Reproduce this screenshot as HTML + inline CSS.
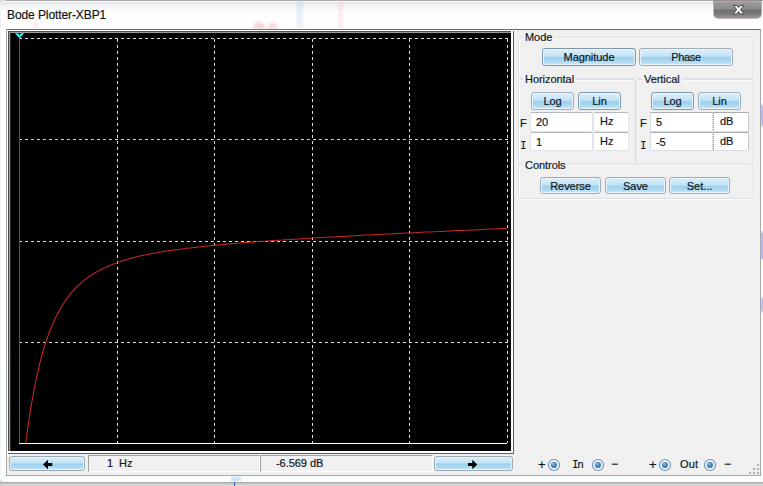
<!DOCTYPE html>
<html lang="en">
<head>
<meta charset="utf-8">
<title>Bode Plotter-XBP1</title>
<style>
html,body{margin:0;padding:0;}
body{width:763px;height:486px;overflow:hidden;background:#fff;font-family:"Liberation Sans",sans-serif;font-size:11px;letter-spacing:-0.05px;color:#0c1424;-webkit-text-stroke:0.18px #0c1424;}
#win{position:absolute;left:0;top:0;width:763px;height:486px;overflow:hidden;background:#dcdcdc;}
#frame{position:absolute;left:0;top:0;width:763px;height:482px;background:linear-gradient(#a8a8a8 0,#a8a8a8 1px,#fcfcfc 1px,#fcfcfc 2px,#e2e4e3 2px,#f0f2f1 5px,#fafbfb 10px,#fefefe 12px,#fefefe 28px,#fbfefe 100%);border-radius:6px 0 0 5px;box-shadow:inset 1px 0 0 #f4f5f5;}
#shadow{position:absolute;left:0;top:482px;width:763px;height:4px;background:linear-gradient(#a4a4a4,#c6c6c6 40%,#dedede);}
.abs{position:absolute;}
#title{position:absolute;left:7px;top:8px;font-size:12px;line-height:15px;color:#111;letter-spacing:-0.09px;white-space:nowrap;}
#close{position:absolute;left:714px;top:1px;width:47px;height:17px;border-radius:0 0 4px 4px;background:linear-gradient(#b4b4b4 0,#999 10%,#8c8c8c 45%,#707070 55%,#7c7c7c 80%,#999 100%);box-shadow:0 0 0 1px rgba(130,105,105,.5);}
#close svg{position:absolute;left:0;top:0;}
#client{position:absolute;left:6px;top:29px;width:753px;height:445px;background:#f0f0f0;border:1px solid #a8a8a8;border-top-color:#6e6e6e;}
/* everything below is positioned in page coordinates */
.grp{position:absolute;border:1px solid #dbe1e6;border-radius:3px;box-shadow:inset 1px 1px 0 #fcfcfc,1px 1px 0 #fcfcfc;box-sizing:border-box;}
.glab{position:absolute;background:#f0f0f0;padding:0 2px;line-height:13px;white-space:nowrap;color:#0c1424;}
.btn{position:absolute;box-sizing:border-box;border:1px solid #9fadb8;border-radius:3px;box-shadow:inset 0 0 0 1px #e9f5fc;background:linear-gradient(#dceefa 0,#cfe8f7 25%,#c3e3f5 46%,#9dd0ed 53%,#acd8f0 78%,#cfe9f7 100%);text-align:center;white-space:nowrap;color:#0a1428;}
.btn.sel{border-color:#7f98aa;}
.edit{position:absolute;box-sizing:border-box;background:#fff;border:1px solid #dfe3ea;border-top-color:#b4b8c0;border-radius:2px;white-space:nowrap;}
.edit2{position:absolute;box-sizing:border-box;background:#fff;border:1px solid #dadde3;border-top-color:#a8abb2;border-radius:1px;white-space:nowrap;}
.edit2.u{border-left:1px dotted #8a8a8a;border-right-color:#c8c8c8;}
.sunk{position:absolute;box-sizing:border-box;background:#f0f0f0;border:1px solid #fff;border-top-color:#a0a0a0;border-left-color:#a0a0a0;white-space:nowrap;}
.t{position:absolute;white-space:nowrap;line-height:13px;}
.mono{font-family:"DejaVu Sans Mono","Liberation Mono",monospace;}
</style>
</head>
<body>
<div id="win">
  <div id="frame"></div>
  <div id="shadow"></div>
  <!-- faint things showing through the glass title bar -->
  <div class="abs" style="left:296px;top:1px;width:7px;height:27px;background:linear-gradient(rgba(190,215,240,.45),rgba(215,232,248,.4));filter:blur(1.3px);"></div>
  <div class="abs" style="left:338px;top:1px;width:5px;height:27px;background:rgba(250,205,225,.4);filter:blur(1.3px);"></div>
  <div class="abs" style="left:253px;top:22px;width:12px;height:7px;border-radius:6px 6px 0 0;background:rgba(240,150,160,.42);filter:blur(1.6px);"></div>
  <div class="abs" style="left:267px;top:23px;width:11px;height:6px;border-radius:6px 6px 0 0;background:rgba(240,150,160,.38);filter:blur(1.6px);"></div>
  <div class="abs" style="left:33px;top:22px;width:5px;height:7px;background:rgba(250,215,235,.5);filter:blur(1px);"></div>
  <div class="abs" style="left:761px;top:105px;width:3px;height:21px;background:rgba(120,120,235,.7);filter:blur(1px);"></div>
  <div class="abs" style="left:761px;top:232px;width:3px;height:27px;background:rgba(120,120,235,.7);filter:blur(1px);"></div>
  <div class="abs" style="left:761px;top:298px;width:3px;height:14px;background:rgba(120,120,235,.65);filter:blur(1px);"></div>
    <div class="abs" style="left:231px;top:477px;width:10px;height:4px;background:rgba(170,205,240,.6);filter:blur(1px);"></div>
  <div class="abs" style="left:234px;top:482px;width:1px;height:4px;background:#3a50b0;"></div>

  <div id="title">Bode Plotter-XBP1</div>
  <div id="close"><svg width="47" height="17" viewBox="0 0 47 17"><path d="M19.3 4.4 L22.8 4.4 L24.6 6.6 L26.4 4.4 L29.9 4.4 L26.4 8.6 L30.1 13 L26.5 13 L24.6 10.6 L22.7 13 L19.1 13 L22.8 8.6 Z" fill="#fff" stroke="#454545" stroke-width="1" stroke-linejoin="round"/></svg></div>

  <div id="client"></div>

  <!-- plot -->
  <svg class="abs" style="left:0;top:0" width="520" height="460" viewBox="0 0 520 460">
    <g shape-rendering="crispEdges">
      <rect x="7" y="30" width="507" height="424" fill="#ffffff"/>
      <rect x="8" y="31" width="506" height="423" fill="#5c5c5c"/>
      <rect x="9" y="32" width="502" height="419" fill="#9c9c9c"/>
      <rect x="8" y="31" width="503" height="1" fill="#4e4e4e"/>
      <rect x="8" y="31" width="1" height="420" fill="#4e4e4e"/>
      <rect x="511" y="31" width="2" height="422" fill="#ffffff"/>
      <rect x="8" y="451" width="505" height="2" fill="#ffffff"/>
      <rect x="10" y="33" width="501" height="418" fill="#000000"/>
      <rect x="10" y="33" width="1" height="418" fill="#303030"/>
      <g stroke="#dadada" stroke-width="1" stroke-dasharray="3 3" fill="none">
        <line x1="19" y1="38.5" x2="508" y2="38.5"/>
        <line x1="19" y1="139.5" x2="508" y2="139.5"/>
        <line x1="19" y1="241.5" x2="508" y2="241.5"/>
        <line x1="19" y1="342.5" x2="508" y2="342.5"/>
        <line x1="117.5" y1="39" x2="117.5" y2="443"/>
        <line x1="214.5" y1="39" x2="214.5" y2="443"/>
        <line x1="312.5" y1="39" x2="312.5" y2="443"/>
        <line x1="409.5" y1="39" x2="409.5" y2="443"/>
        <line x1="507.5" y1="39" x2="507.5" y2="443"/>
      </g>
      <rect x="19" y="443" width="488" height="1" fill="#ffffff"/>
      <rect x="19" y="38" width="1" height="405" fill="#c42424"/>
    </g>
    <path d="M14.8 33.3 L18.3 33.3 L19.5 35.3 L20.7 33.3 L24.2 33.3 L19.5 38.6 Z" fill="#2ee8ee"/>
    <path d="M25.7 443.5 L26.0 441.3 L26.5 437.5 L27.0 433.7 L27.5 430.0 L28.0 426.5 L28.5 423.0 L29.0 419.6 L29.5 416.3 L30.0 413.1 L30.5 409.9 L31.0 406.9 L31.5 403.9 L32.0 400.9 L32.5 398.1 L33.0 395.3 L33.5 392.6 L34.0 390.0 L34.5 387.4 L35.0 384.9 L35.5 382.4 L36.0 380.0 L36.5 377.6 L37.0 375.3 L37.5 373.1 L38.0 370.9 L38.5 368.8 L39.0 366.7 L39.5 364.6 L40.0 362.6 L40.5 360.7 L41.0 358.7 L41.5 356.9 L42.0 355.0 L42.5 353.2 L43.0 351.5 L43.5 349.8 L44.0 348.1 L44.5 346.5 L45.0 344.9 L45.5 343.3 L46.0 341.7 L46.5 340.2 L47.0 338.8 L47.5 337.3 L48.0 335.9 L48.5 334.5 L49.0 333.2 L49.5 331.8 L50.0 330.5 L50.5 329.2 L51.0 328.0 L51.5 326.8 L52.0 325.6 L52.5 324.4 L53.0 323.2 L53.5 322.1 L54.0 321.0 L54.5 319.9 L55.0 318.8 L55.5 317.8 L56.0 316.8 L56.5 315.7 L57.0 314.8 L57.5 313.8 L58.0 312.8 L58.5 311.9 L59.0 311.0 L59.5 310.1 L60.0 309.2 L61.0 307.5 L62.0 305.8 L63.0 304.2 L64.0 302.7 L65.0 301.2 L66.0 299.7 L67.0 298.3 L68.0 297.0 L69.0 295.7 L70.0 294.4 L71.0 293.2 L72.0 292.0 L73.0 290.9 L74.0 289.8 L75.0 288.7 L76.0 287.7 L77.0 286.7 L78.0 285.7 L79.0 284.8 L80.0 283.8 L81.0 283.0 L82.0 282.1 L83.0 281.3 L84.0 280.4 L85.0 279.7 L86.0 278.9 L87.0 278.1 L88.0 277.4 L89.0 276.7 L90.0 276.0 L91.0 275.3 L92.0 274.7 L93.0 274.1 L94.0 273.4 L95.0 272.8 L96.0 272.3 L97.0 271.7 L98.0 271.1 L99.0 270.6 L100.0 270.0 L101.0 269.5 L102.0 269.0 L103.0 268.5 L104.0 268.1 L105.0 267.6 L106.0 267.1 L107.0 266.7 L108.0 266.2 L109.0 265.8 L110.0 265.4 L111.0 265.0 L112.0 264.6 L113.0 264.2 L114.0 263.8 L115.0 263.4 L116.0 263.1 L117.0 262.7 L118.0 262.3 L119.0 262.0 L120.0 261.7 L121.0 261.3 L122.0 261.0 L123.0 260.7 L124.0 260.4 L125.0 260.1 L126.0 259.8 L127.0 259.5 L128.0 259.2 L129.0 258.9 L130.0 258.6 L134.0 257.6 L138.0 256.6 L142.0 255.6 L146.0 254.8 L150.0 254.0 L154.0 253.2 L158.0 252.5 L162.0 251.8 L166.0 251.1 L170.0 250.5 L174.0 249.9 L178.0 249.4 L182.0 248.9 L186.0 248.3 L190.0 247.9 L194.0 247.4 L198.0 246.9 L202.0 246.5 L206.0 246.1 L210.0 245.7 L214.0 245.3 L218.0 244.9 L222.0 244.5 L226.0 244.2 L230.0 243.8 L234.0 243.5 L238.0 243.2 L242.0 242.8 L246.0 242.5 L250.0 242.2 L254.0 241.9 L258.0 241.6 L262.0 241.3 L266.0 241.1 L270.0 240.8 L274.0 240.5 L278.0 240.2 L282.0 240.0 L286.0 239.7 L290.0 239.5 L294.0 239.2 L298.0 239.0 L302.0 238.7 L306.0 238.5 L310.0 238.2 L314.0 238.0 L318.0 237.8 L322.0 237.5 L326.0 237.3 L330.0 237.1 L334.0 236.9 L338.0 236.6 L342.0 236.4 L346.0 236.2 L350.0 236.0 L354.0 235.8 L358.0 235.5 L362.0 235.3 L366.0 235.1 L370.0 234.9 L374.0 234.7 L378.0 234.5 L382.0 234.3 L386.0 234.1 L390.0 233.9 L394.0 233.7 L398.0 233.5 L402.0 233.3 L406.0 233.1 L410.0 232.9 L414.0 232.7 L418.0 232.5 L422.0 232.3 L426.0 232.1 L430.0 231.9 L434.0 231.7 L438.0 231.6 L442.0 231.4 L446.0 231.2 L450.0 231.0 L454.0 230.8 L458.0 230.6 L462.0 230.4 L466.0 230.2 L470.0 230.1 L474.0 229.9 L478.0 229.7 L482.0 229.5 L486.0 229.3 L490.0 229.1 L494.0 229.0 L498.0 228.8 L502.0 228.6 L506.0 228.4 L506.5 228.4" fill="none" stroke="#cc2725" stroke-width="1.05" stroke-linejoin="round"/>
  </svg>

  <!-- Mode group -->
  <div class="grp" style="left:518px;top:37px;width:236px;height:42px;"></div>
  <div class="glab" style="left:523px;top:31px;">Mode</div>
  <div class="btn sel" style="left:542px;top:48px;width:94px;height:18px;line-height:16px;">Magnitude</div>
  <div class="btn" style="left:639px;top:48px;width:94px;height:18px;line-height:16px;letter-spacing:-0.35px;">Phase</div>

  <!-- Horizontal group -->
  <div class="grp" style="left:518px;top:79px;width:118px;height:86px;"></div>
  <div class="glab" style="left:523px;top:73px;">Horizontal</div>
  <div class="btn" style="left:531px;top:92px;width:43px;height:18px;line-height:16px;">Log</div>
  <div class="btn sel" style="left:578px;top:92px;width:43px;height:18px;line-height:16px;">Lin</div>
  <div class="t" style="left:520px;top:117px;">F</div>
  <div class="edit" style="left:530px;top:112px;width:63px;height:20px;"></div>
  <div class="t" style="left:536px;top:116px;">20</div>
  <div class="edit" style="left:593px;top:112px;width:36px;height:20px;"></div>
  <div class="t" style="left:600px;top:115px;">Hz</div>
  <div class="t mono" style="left:520px;top:139px;font-size:11px;-webkit-text-stroke:0;">I</div>
  <div class="edit" style="left:530px;top:132px;width:63px;height:19px;"></div>
  <div class="t" style="left:536px;top:136px;">1</div>
  <div class="edit" style="left:593px;top:132px;width:36px;height:19px;"></div>
  <div class="t" style="left:600px;top:135px;">Hz</div>

  <!-- Vertical group -->
  <div class="grp" style="left:636px;top:79px;width:118px;height:86px;"></div>
  <div class="glab" style="left:642px;top:73px;">Vertical</div>
  <div class="btn sel" style="left:651px;top:92px;width:43px;height:18px;line-height:16px;">Log</div>
  <div class="btn" style="left:698px;top:92px;width:43px;height:18px;line-height:16px;">Lin</div>
  <div class="t" style="left:640px;top:117px;">F</div>
  <div class="edit2" style="left:650px;top:112px;width:63px;height:20px;"></div>
  <div class="t" style="left:656px;top:116px;">5</div>
  <div class="edit2 u" style="left:713px;top:112px;width:36px;height:20px;"></div>
  <div class="t" style="left:720px;top:115px;">dB</div>
  <div class="t mono" style="left:640px;top:139px;font-size:11px;-webkit-text-stroke:0;">I</div>
  <div class="edit2" style="left:650px;top:132px;width:63px;height:19px;"></div>
  <div class="t" style="left:656px;top:136px;">-5</div>
  <div class="edit2 u" style="left:713px;top:132px;width:36px;height:19px;"></div>
  <div class="t" style="left:720px;top:135px;">dB</div>

  <!-- Controls group -->
  <div class="grp" style="left:518px;top:164px;width:236px;height:35px;"></div>
  <div class="glab" style="left:523px;top:159px;">Controls</div>
  <div class="btn" style="left:540px;top:177px;width:61px;height:17px;line-height:17px;">Reverse</div>
  <div class="btn" style="left:605px;top:177px;width:61px;height:17px;line-height:17px;">Save</div>
  <div class="btn" style="left:669px;top:177px;width:61px;height:17px;line-height:17px;">Set...</div>

  <!-- bottom bar -->
  <div class="btn" style="left:9px;top:456px;width:76px;height:15px;border-color:#9aa9b4;"></div>
  <svg class="abs" style="left:40px;top:457px" width="16" height="14" viewBox="0 0 16 14"><path d="M3 7.5 L8 2.8 L8 6 L12.3 6 L12.3 9 L8 9 L8 12.2 Z" fill="#000"/></svg>
  <div class="sunk" style="left:88px;top:455px;width:172px;height:17px;"></div>
  <div class="t" style="left:107px;top:457px;">1&nbsp; Hz</div>
  <div class="sunk" style="left:260px;top:455px;width:173px;height:17px;"></div>
  <div class="t" style="left:276px;top:457px;">-6.569 dB</div>
  <div class="btn" style="left:434px;top:456px;width:79px;height:15px;border-color:#9aa9b4;"></div>
  <svg class="abs" style="left:464px;top:457px" width="16" height="14" viewBox="0 0 16 14"><path d="M13.3 7.5 L8.3 2.8 L8.3 6 L4 6 L4 9 L8.3 9 L8.3 12.2 Z" fill="#000"/></svg>

  <!-- terminals -->
  <div class="t" style="left:538px;top:458px;font-size:13px;">+</div>
  <svg class="abs" style="left:547px;top:458px" width="14" height="14" viewBox="0 0 14 14"><circle cx="7" cy="7" r="5.5" fill="#f2f7fb" stroke="#6c96be" stroke-width="1.15"/><circle cx="7" cy="7" r="3.1" fill="#4685b8"/><circle cx="6.3" cy="6.1" r="1.4" fill="#86b8dc"/></svg>
  <div class="t mono" style="left:572px;top:458px;font-size:11px;-webkit-text-stroke:0;">I</div><div class="t" style="left:577.5px;top:458px;">n</div>
  <svg class="abs" style="left:591px;top:458px" width="14" height="14" viewBox="0 0 14 14"><circle cx="7" cy="7" r="5.5" fill="#f2f7fb" stroke="#6c96be" stroke-width="1.15"/><circle cx="7" cy="7" r="3.1" fill="#4685b8"/><circle cx="6.3" cy="6.1" r="1.4" fill="#86b8dc"/></svg>
  <div class="t" style="left:611px;top:458px;font-size:12px;">&#8722;</div>

  <div class="t" style="left:649px;top:458px;font-size:13px;">+</div>
  <svg class="abs" style="left:658px;top:458px" width="14" height="14" viewBox="0 0 14 14"><circle cx="7" cy="7" r="5.5" fill="#f2f7fb" stroke="#6c96be" stroke-width="1.15"/><circle cx="7" cy="7" r="3.1" fill="#4685b8"/><circle cx="6.3" cy="6.1" r="1.4" fill="#86b8dc"/></svg>
  <div class="t" style="left:680px;top:458px;letter-spacing:0.2px;">Out</div>
  <svg class="abs" style="left:703px;top:458px" width="14" height="14" viewBox="0 0 14 14"><circle cx="7" cy="7" r="5.5" fill="#f2f7fb" stroke="#6c96be" stroke-width="1.15"/><circle cx="7" cy="7" r="3.1" fill="#4685b8"/><circle cx="6.3" cy="6.1" r="1.4" fill="#86b8dc"/></svg>
  <div class="t" style="left:724px;top:458px;font-size:12px;">&#8722;</div>

  <!-- resize grip -->
  <svg class="abs" style="left:748px;top:463px" width="12" height="12" viewBox="0 0 12 12" shape-rendering="crispEdges">
    <g fill="#b0b0b0"><rect x="9" y="1" width="2" height="2"/><rect x="5" y="5" width="2" height="2"/><rect x="9" y="5" width="2" height="2"/><rect x="1" y="9" width="2" height="2"/><rect x="5" y="9" width="2" height="2"/><rect x="9" y="9" width="2" height="2"/></g>
  </svg>
</div>
</body>
</html>
